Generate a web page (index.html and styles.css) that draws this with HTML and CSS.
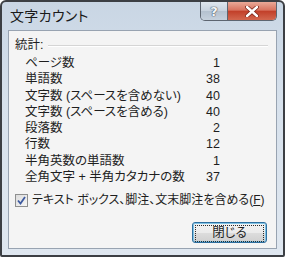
FILE: index.html
```html
<!DOCTYPE html>
<html>
<head>
    <title>文字カウント</title>
    <link rel="stylesheet" href="styles.css">
</head>
<body>
    <div class="window">
        <div class="titlebar">
            <span class="title">文字カウント</span>
            <div class="caption-buttons">
                <span class="btn-help">?</span>
                <span class="btn-close">
                    <svg width="14" height="11" viewBox="0 0 14 11">
                        <path d="M2 1 L12 10 M12 1 L2 10" stroke="#7a2418" stroke-width="4" stroke-linecap="round"/>
                        <path d="M2 1 L12 10 M12 1 L2 10" stroke="#ffffff" stroke-width="2.4" stroke-linecap="round"/>
                    </svg>
                </span>
            </div>
        </div>

        <div class="client">
            <div class="group-head">
                <span>統計:</span>
                <span class="group-line"></span>
            </div>

            <div class="stats">
                <div class="row"><span>ページ数</span><span class="num">1</span></div>
                <div class="row"><span>単語数</span><span class="num">38</span></div>
                <div class="row"><span>文字数 (スペースを含めない)</span><span class="num">40</span></div>
                <div class="row"><span>文字数 (スペースを含める)</span><span class="num">40</span></div>
                <div class="row"><span>段落数</span><span class="num">2</span></div>
                <div class="row"><span>行数</span><span class="num">12</span></div>
                <div class="row"><span>半角英数の単語数</span><span class="num">1</span></div>
                <div class="row"><span>全角文字 + 半角カタカナの数</span><span class="num">37</span></div>
            </div>

            <div class="check-row">
                <span class="checkbox">
                    <svg width="9" height="9" viewBox="0 0 9 9">
                        <path d="M1 4.5 L3.5 7.5 L8 1" fill="none" stroke="#3d5aa0" stroke-width="1.8"/>
                    </svg>
                </span>
                <span>テキスト ボックス、脚注、文末脚注を含める(<u>F</u>)</span>
            </div>

            <div class="button-row">
                <button class="btn-close-dialog" type="button"><span class="focus">閉じる</span></button>
            </div>
        </div>
    </div>
</body>
</html>
```

FILE: styles.css
```css
body {
    margin: 0;
    padding: 0;
    background-color: #ffffff;
    font-family: "Liberation Sans", "Noto Sans CJK JP", sans-serif;
    font-feature-settings: "palt";
    color: #1e1e1e;
}

.window {
    border: 2px solid #3c3f44;
    border-radius: 6px 6px 2px 2px;
    background: linear-gradient(180deg, #c9d6e4 0%, #d7e1ec 40%, #dfe7f0 100%);
    padding: 0 6px 6px 6px;
    box-sizing: content-box;
    width: 269px;
    height: 247px;
}

.titlebar {
    height: 28px;
    display: flex;
    align-items: flex-start;
}

.title {
    font-size: 14px;
    line-height: 16px;
    margin-top: 6px;
    margin-left: 2px;
    color: #1a1a1a;
    letter-spacing: 0.3px;
}

.caption-buttons {
    margin-left: auto;
    display: flex;
    height: 18px;
    border: 1px solid #5d6570;
    border-top: none;
    border-radius: 0 0 5px 5px;
    overflow: hidden;
}

.btn-help {
    width: 26px;
    display: flex;
    align-items: center;
    justify-content: center;
    background: linear-gradient(180deg, #dfe6ee 0%, #c7d2de 50%, #b4c1cf 51%, #c6d1dd 100%);
    border-right: 1px solid #5d6570;
    color: #f4f6f8;
    font-family: "DejaVu Sans", sans-serif;
    font-weight: bold;
    font-size: 13px;
    text-shadow: 0 0 1px #4a5563, 0 0 1px #4a5563, 0 0 1px #4a5563;
}

.btn-close {
    width: 48px;
    display: flex;
    align-items: center;
    justify-content: center;
    background: linear-gradient(180deg, #e9a998 0%, #d8735f 45%, #c2402a 52%, #d2674f 100%);
}

.client {
    border: 1px solid #98a3b1;
    background-color: #f4f4f4;
    padding: 6px 0 0 6px;
    box-sizing: content-box;
    height: 211px;
    font-size: 12px;
}

.group-head {
    display: flex;
    align-items: center;
    height: 16px;
    line-height: 16px;
    margin-right: 8px;
    font-size: 12.5px;
}

.group-line {
    flex: 1;
    height: 0;
    border-top: 1px solid #d5d5d5;
    border-bottom: 1px solid #ffffff;
    margin-left: 5px;
    margin-top: 1px;
}

.stats {
    margin: 2px 0 0 10px;
    width: 195px;
    font-size: 12.5px;
}

.row {
    display: flex;
    justify-content: space-between;
    height: 16.3px;
    line-height: 16.3px;
}

.num {
    text-align: right;
}

.check-row {
    display: flex;
    align-items: center;
    height: 16px;
    line-height: 16px;
    margin-top: 7px;
}

.checkbox {
    width: 11px;
    height: 11px;
    border: 1px solid #8e8f8f;
    background: linear-gradient(135deg, #dcdcdc 0%, #f6f6f6 100%);
    display: flex;
    align-items: center;
    justify-content: center;
    margin-right: 4px;
}

.button-row {
    display: flex;
    justify-content: flex-end;
    padding-right: 9px;
    margin-top: 14px;
}

.btn-close-dialog {
    width: 75px;
    height: 21px;
    padding: 2px;
    border: 1px solid #2f6f9f;
    border-radius: 3px;
    background: linear-gradient(180deg, #f3f3f3 0%, #ebebeb 50%, #dddddd 51%, #d0d0d0 100%);
    box-shadow: inset 0 0 0 1px #7fc3e6;
    font-family: "Liberation Sans", "Noto Sans CJK JP", sans-serif;
    font-feature-settings: "palt";
    font-size: 12.5px;
    color: #1e1e1e;
    cursor: pointer;
}

.focus {
    display: block;
    height: 15px;
    line-height: 15px;
    border: 1px dotted #2b2b2b;
}
```
